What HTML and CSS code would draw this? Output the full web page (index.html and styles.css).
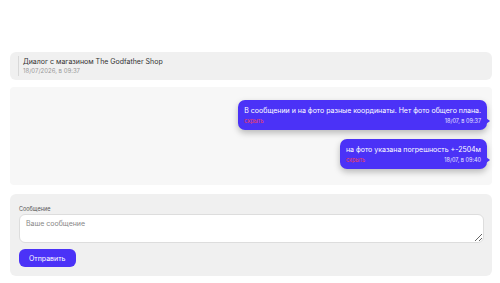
FILE: index.html
```html
<!DOCTYPE html>
<html lang="ru">
<head>
    <meta charset="UTF-8">
    <meta name="viewport" content="width=device-width, initial-scale=1.0">
    <title>Диалог</title>
    <link rel="stylesheet" href="styles.css">
</head>
<body>
    <div class="page">
        <div class="dialog-head">
            <div class="dialog-title">Диалог с магазином The Godfather Shop</div>
            <div class="dialog-date">18/07/2026, в 09:37</div>
        </div>

        <div class="messages">
            <div class="msg">
                <div class="msg-text">В сообщении и на фото разные координаты. Нет фото общего плана.</div>
                <div class="msg-meta">
                    <a class="msg-hide" href="#">скрыть</a>
                    <span class="msg-time">18/07, в 09:37</span>
                </div>
            </div>
            <div class="msg">
                <div class="msg-text">на фото указана погрешность +-2504м</div>
                <div class="msg-meta">
                    <a class="msg-hide" href="#">скрыть</a>
                    <span class="msg-time">18/07, в 09:40</span>
                </div>
            </div>
        </div>

        <form class="reply">
            <label class="reply-label" for="reply-text">Сообщение</label>
            <textarea class="reply-input" id="reply-text" placeholder="Ваше сообщение"></textarea>
            <div class="reply-actions">
                <button class="reply-send" type="button">Отправить</button>
            </div>
        </form>
    </div>
</body>
</html>
```

FILE: styles.css
```css
body {
    margin: 0;
    background: #fff;
    font-family: Inter, "Noto Sans", sans-serif;
    color: #222;
}
.page {
    padding: 52px 8px 0 10px;
    display: flex;
    flex-direction: column;
    gap: 7px;
}
.dialog-head {
    background: #f0f0f0;
    border-radius: 6px;
    padding: 4px 10px 4px 8px;
}
.dialog-title,
.dialog-date {
    border-left: 1px solid #d8d8d8;
    padding-left: 4px;
}
.dialog-title {
    font-size: 7px;
    line-height: 10px;
    padding-top: 1px;
    color: #333;
}
.dialog-date {
    font-size: 6px;
    line-height: 8px;
    color: #999;
    padding-bottom: 1px;
}
.messages {
    background: #f7f7f7;
    border-radius: 4px;
    padding: 13px 5px 16px;
    display: flex;
    flex-direction: column;
    align-items: flex-end;
    gap: 9px;
}
.msg {
    position: relative;
    background: #4b32f7;
    color: #fff;
    border-radius: 7px;
    padding: 5px 6px 4px;
    box-shadow: 0 3px 6px rgba(0, 0, 0, 0.25);
}
.msg::after {
    content: "";
    position: absolute;
    right: -3px;
    top: 60%;
    border-left: 4px solid #4b32f7;
    border-top: 3px solid transparent;
    border-bottom: 3px solid transparent;
}
.msg-text {
    font-size: 7px;
    line-height: 11px;
}
.msg-meta {
    display: flex;
    justify-content: space-between;
    gap: 20px;
    font-size: 5.5px;
    line-height: 10px;
}
.msg-hide {
    color: #f0405a;
    text-decoration: none;
}
.msg-time {
    color: #e4e2ff;
}
.reply {
    margin-top: 2px;
    background: #f0f0f0;
    border-radius: 6px;
    padding: 11px 8px 9px 9px;
    display: flex;
    flex-direction: column;
}
.reply-label {
    font-size: 5.5px;
    color: #555;
    line-height: 8px;
    margin-bottom: 1px;
}
.reply-input {
    box-sizing: border-box;
    height: 29px;
    border: 1px solid #ddd;
    border-radius: 6px;
    padding: 4px 6px;
    font-family: inherit;
    font-size: 7px;
    resize: vertical;
    margin: 0 0 6px;
}
.reply-input::placeholder {
    color: #888;
}
.reply-actions {
    display: flex;
}
.reply-send {
    background: #4b32f7;
    color: #fff;
    border: 0;
    border-radius: 6px;
    font-family: inherit;
    font-size: 7px;
    padding: 0 10px;
    height: 18px;
}
```
